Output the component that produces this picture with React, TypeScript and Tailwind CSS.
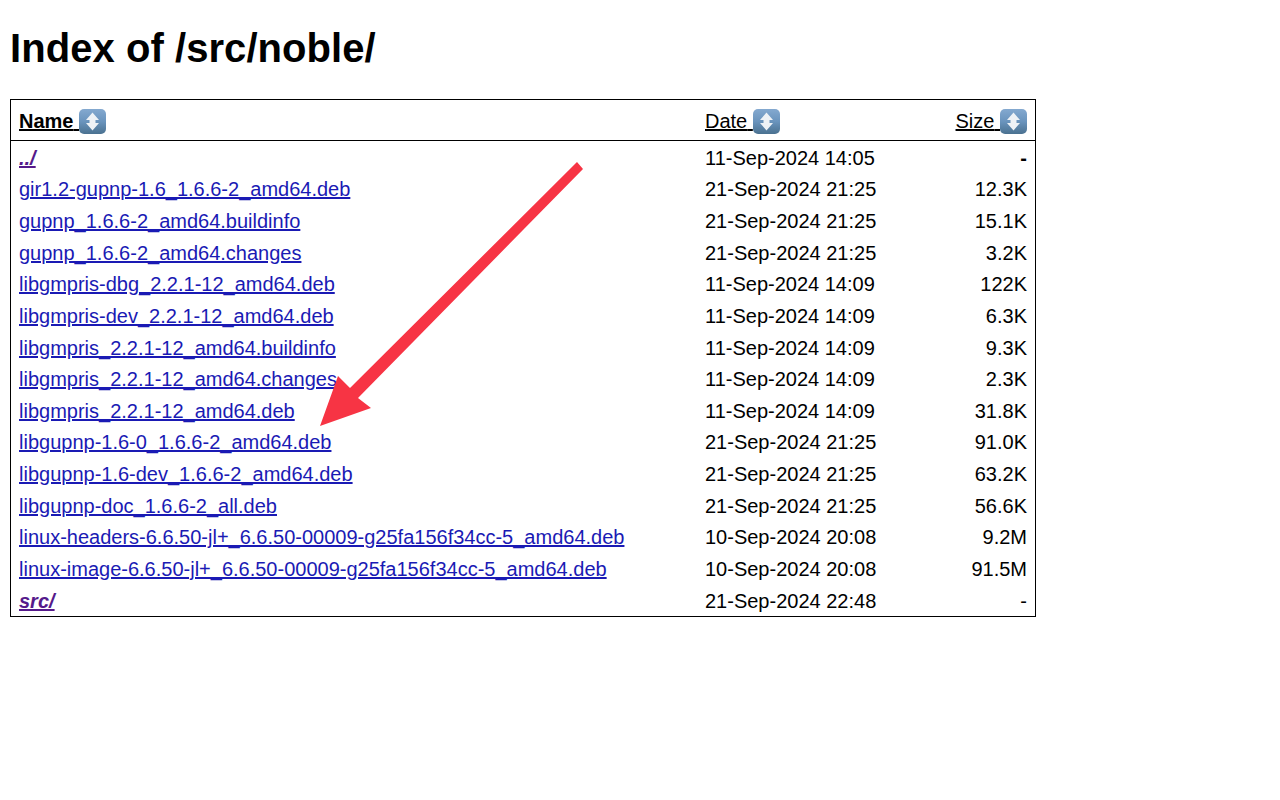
const rows = [
  { name: '../', date: '11-Sep-2024 14:05', size: '-', dir: true, bold: true },
  { name: 'gir1.2-gupnp-1.6_1.6.6-2_amd64.deb', date: '21-Sep-2024 21:25', size: '12.3K' },
  { name: 'gupnp_1.6.6-2_amd64.buildinfo', date: '21-Sep-2024 21:25', size: '15.1K' },
  { name: 'gupnp_1.6.6-2_amd64.changes', date: '21-Sep-2024 21:25', size: '3.2K' },
  { name: 'libgmpris-dbg_2.2.1-12_amd64.deb', date: '11-Sep-2024 14:09', size: '122K' },
  { name: 'libgmpris-dev_2.2.1-12_amd64.deb', date: '11-Sep-2024 14:09', size: '6.3K' },
  { name: 'libgmpris_2.2.1-12_amd64.buildinfo', date: '11-Sep-2024 14:09', size: '9.3K' },
  { name: 'libgmpris_2.2.1-12_amd64.changes', date: '11-Sep-2024 14:09', size: '2.3K' },
  { name: 'libgmpris_2.2.1-12_amd64.deb', date: '11-Sep-2024 14:09', size: '31.8K' },
  { name: 'libgupnp-1.6-0_1.6.6-2_amd64.deb', date: '21-Sep-2024 21:25', size: '91.0K' },
  { name: 'libgupnp-1.6-dev_1.6.6-2_amd64.deb', date: '21-Sep-2024 21:25', size: '63.2K' },
  { name: 'libgupnp-doc_1.6.6-2_all.deb', date: '21-Sep-2024 21:25', size: '56.6K' },
  { name: 'linux-headers-6.6.50-jl+_6.6.50-00009-g25fa156f34cc-5_amd64.deb', date: '10-Sep-2024 20:08', size: '9.2M' },
  { name: 'linux-image-6.6.50-jl+_6.6.50-00009-g25fa156f34cc-5_amd64.deb', date: '10-Sep-2024 20:08', size: '91.5M' },
  { name: 'src/', date: '21-Sep-2024 22:48', size: '-', dir: true },
]

function SortIcon() {
  return (
    <svg width="27" height="25" viewBox="0 0 27 25" className="inline-block align-[-6px]">
      <defs>
        <linearGradient id="sort-bg" x1="0" y1="0" x2="0" y2="1">
          <stop offset="0" stopColor="#84a9d0" />
          <stop offset="0.5" stopColor="#6a94bd" />
          <stop offset="1" stopColor="#4a7190" />
        </linearGradient>
      </defs>
      <rect x="0" y="0" width="27" height="25" rx="5" fill="url(#sort-bg)" />
      <path d="M13.5 3.5 L20 11 H16.5 V14 H20 L13.5 21.5 L7 14 H10.5 V11 H7 Z" fill="#eef2f6" />
    </svg>
  )
}

function Header({ label, bold = false }: { label: string; bold?: boolean }) {
  return (
    <a href="#" className={`text-black underline ${bold ? 'font-bold' : ''}`}>
      {label} <SortIcon />
    </a>
  )
}

export default function App() {
  return (
    <div className="relative min-h-[800px] bg-white text-black text-[20px] font-['Liberation_Sans',Arial,sans-serif]">
      <div className="px-[10px]">
        <h1 className="pt-[24px] pb-[27px] text-[40px] leading-[48px] font-bold tracking-[0.06px]">Index of /src/noble/</h1>
        <div className="w-[1026px] border border-black">
          <div className="grid grid-cols-[686px_1fr_auto] items-center h-[41px] pt-[2px] pl-[8px] pr-[8px] border-b border-black">
            <div><Header label="Name" bold /></div>
            <div><Header label="Date" /></div>
            <div className="text-right"><Header label="Size" /></div>
          </div>
          <div className="pt-[1px]">
            {rows.map(row => (
              <div key={row.name} className="grid grid-cols-[686px_1fr_auto] items-center h-[31.63px] pl-[8px] pr-[8px] whitespace-nowrap">
                <div>
                  <a href="#" className={`underline ${row.dir ? 'text-[#551a8b] italic font-bold' : 'text-[#1a1ab4]'}`}>{row.name}</a>
                </div>
                <div>{row.date}</div>
                <div className={`text-right ${row.bold ? 'font-bold' : ''}`}>{row.size}</div>
              </div>
            ))}
          </div>
        </div>
      </div>
      <svg width="1280" height="800" viewBox="0 0 1280 800" className="absolute left-0 top-0 pointer-events-none">
        <path d="M577 162 L583 169 L358 398 L371 408 L320 426 L338 376 L350 388 Z" fill="#f73444" />
      </svg>
    </div>
  )
}
